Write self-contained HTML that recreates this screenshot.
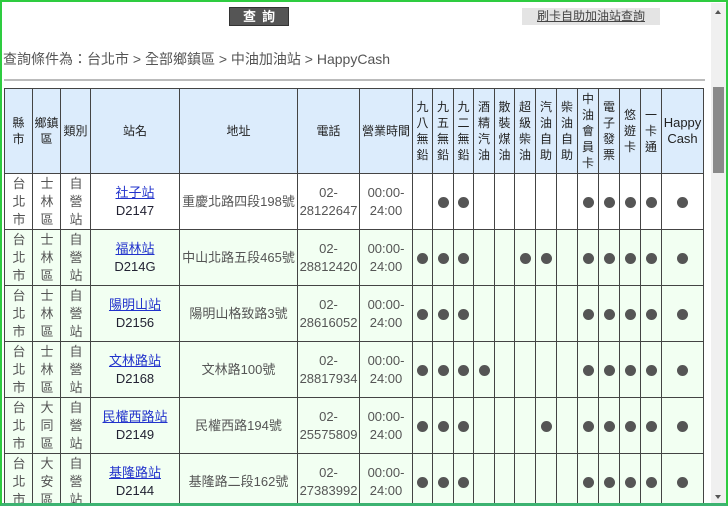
<!DOCTYPE html>
<html><head><meta charset="utf-8"><style>
*{margin:0;padding:0;box-sizing:border-box}
html,body{width:728px;height:506px;overflow:hidden}
body{background:#fff;font-family:"Liberation Sans","Noto Sans CJK TC",sans-serif;position:relative}
.wrap{position:absolute;left:0;top:0;width:728px;height:506px;overflow:hidden}
.frame{position:absolute;left:0;top:0;width:728px;height:506px;border:2px solid #2ecc40;border-bottom:3px solid #3cb371;pointer-events:none;z-index:5}
.btn1{position:absolute;left:229px;top:7px;width:60px;height:19px;background:#555;border:1px solid #333;color:#fff;font-weight:bold;font-size:13px;text-align:center;line-height:17px;letter-spacing:6px;padding-left:6px}
.btn2{position:absolute;left:522px;top:8px;width:138px;height:17px;background:#e4e4e4;color:#444;font-size:12px;text-align:center;line-height:17px;text-decoration:underline}
.crumb{position:absolute;left:3px;top:49px;font-size:14px;color:#555}
.hr{position:absolute;left:4px;top:79px;width:701px;height:2px;background:#bbb}
.sb{position:absolute;left:711px;top:3px;width:15px;height:500px;background:#f0f0f0}
.sb .t{position:absolute;left:2px;top:84px;width:11px;height:86px;background:#8a8a8a}
.sb .u{position:absolute;left:4px;top:7px;border:3px solid transparent;border-bottom:4px solid #555;border-top:0}
.sb .d{position:absolute;left:4px;top:492px;border:3px solid transparent;border-top:4px solid #555;border-bottom:0}
table{position:absolute;left:4px;top:88px;border-collapse:collapse;table-layout:fixed;width:700px;font-size:13px;color:#555}
td,th{border:1px solid #444;text-align:center;vertical-align:middle;padding:0;line-height:18px;overflow:hidden}
th{background:#dcecfc;font-weight:normal;color:#222;height:85px;line-height:16px;font-size:12px}
tr.r td{height:56px}
tr.g td{background:#f2fff2}
a{color:#2233cc;text-decoration:underline}
.id{color:#223}
.v{width:12px;margin:0 auto;word-break:break-all}
.dot{display:inline-block;width:11px;height:11px;border-radius:50%;background:#555;vertical-align:middle}
</style></head><body><div class="wrap">
<div class="btn1">查詢</div>
<div class="btn2">刷卡自助加油站查詢</div>
<div class="crumb">查詢條件為：台北市 &gt; 全部鄉鎮區 &gt; 中油加油站 &gt; HappyCash</div>
<div class="hr"></div>
<table>
<colgroup><col style="width:28px"><col style="width:28px"><col style="width:30px"><col style="width:89px"><col style="width:118px"><col style="width:62px"><col style="width:53px"><col style="width:20px"><col style="width:21px"><col style="width:20px"><col style="width:21px"><col style="width:20px"><col style="width:21px"><col style="width:21px"><col style="width:21px"><col style="width:21px"><col style="width:21px"><col style="width:21px"><col style="width:21px"><col style="width:42px"></colgroup>
<tr><th><div class="v">縣市</div></th><th><div style="width:26px;margin:0 auto;word-break:break-all">鄉鎮區</div></th><th>類別</th><th>站名</th><th>地址</th><th>電話</th><th>營業時間</th><th><div class="v">九八無鉛</div></th><th><div class="v">九五無鉛</div></th><th><div class="v">九二無鉛</div></th><th><div class="v">酒精汽油</div></th><th><div class="v">散裝煤油</div></th><th><div class="v">超級柴油</div></th><th><div class="v">汽油自助</div></th><th><div class="v">柴油自助</div></th><th><div class="v">中油會員卡</div></th><th><div class="v">電子發票</div></th><th><div class="v">悠遊卡</div></th><th><div class="v">一卡通</div></th><th style="font-size:13px">Happy Cash</th></tr>
<tr class="r"><td><div class="v">台北市</div></td><td><div class="v">士林區</div></td><td><div class="v">自營站</div></td><td><a>社子站</a><br><span class="id">D2147</span></td><td>重慶北路四段198號</td><td>02-<br>28122647</td><td>00:00-<br>24:00</td><td></td><td><i class="dot"></i></td><td><i class="dot"></i></td><td></td><td></td><td></td><td></td><td></td><td><i class="dot"></i></td><td><i class="dot"></i></td><td><i class="dot"></i></td><td><i class="dot"></i></td><td><i class="dot"></i></td></tr>
<tr class="r g"><td><div class="v">台北市</div></td><td><div class="v">士林區</div></td><td><div class="v">自營站</div></td><td><a>福林站</a><br><span class="id">D214G</span></td><td>中山北路五段465號</td><td>02-<br>28812420</td><td>00:00-<br>24:00</td><td><i class="dot"></i></td><td><i class="dot"></i></td><td><i class="dot"></i></td><td></td><td></td><td><i class="dot"></i></td><td><i class="dot"></i></td><td></td><td><i class="dot"></i></td><td><i class="dot"></i></td><td><i class="dot"></i></td><td><i class="dot"></i></td><td><i class="dot"></i></td></tr>
<tr class="r g"><td><div class="v">台北市</div></td><td><div class="v">士林區</div></td><td><div class="v">自營站</div></td><td><a>陽明山站</a><br><span class="id">D2156</span></td><td>陽明山格致路3號</td><td>02-<br>28616052</td><td>00:00-<br>24:00</td><td><i class="dot"></i></td><td><i class="dot"></i></td><td><i class="dot"></i></td><td></td><td></td><td></td><td></td><td></td><td><i class="dot"></i></td><td><i class="dot"></i></td><td><i class="dot"></i></td><td><i class="dot"></i></td><td><i class="dot"></i></td></tr>
<tr class="r g"><td><div class="v">台北市</div></td><td><div class="v">士林區</div></td><td><div class="v">自營站</div></td><td><a>文林路站</a><br><span class="id">D2168</span></td><td>文林路100號</td><td>02-<br>28817934</td><td>00:00-<br>24:00</td><td><i class="dot"></i></td><td><i class="dot"></i></td><td><i class="dot"></i></td><td><i class="dot"></i></td><td></td><td></td><td></td><td></td><td><i class="dot"></i></td><td><i class="dot"></i></td><td><i class="dot"></i></td><td><i class="dot"></i></td><td><i class="dot"></i></td></tr>
<tr class="r g"><td><div class="v">台北市</div></td><td><div class="v">大同區</div></td><td><div class="v">自營站</div></td><td><a>民權西路站</a><br><span class="id">D2149</span></td><td>民權西路194號</td><td>02-<br>25575809</td><td>00:00-<br>24:00</td><td><i class="dot"></i></td><td><i class="dot"></i></td><td><i class="dot"></i></td><td></td><td></td><td></td><td><i class="dot"></i></td><td></td><td><i class="dot"></i></td><td><i class="dot"></i></td><td><i class="dot"></i></td><td><i class="dot"></i></td><td><i class="dot"></i></td></tr>
<tr class="r g"><td><div class="v">台北市</div></td><td><div class="v">大安區</div></td><td><div class="v">自營站</div></td><td><a>基隆路站</a><br><span class="id">D2144</span></td><td>基隆路二段162號</td><td>02-<br>27383992</td><td>00:00-<br>24:00</td><td><i class="dot"></i></td><td><i class="dot"></i></td><td><i class="dot"></i></td><td></td><td></td><td></td><td></td><td></td><td><i class="dot"></i></td><td><i class="dot"></i></td><td><i class="dot"></i></td><td><i class="dot"></i></td><td><i class="dot"></i></td></tr>
</table>
<div class="sb"><div class="u"></div><div class="t"></div><div class="d"></div></div>
<div class="frame"></div>
</div></body></html>
